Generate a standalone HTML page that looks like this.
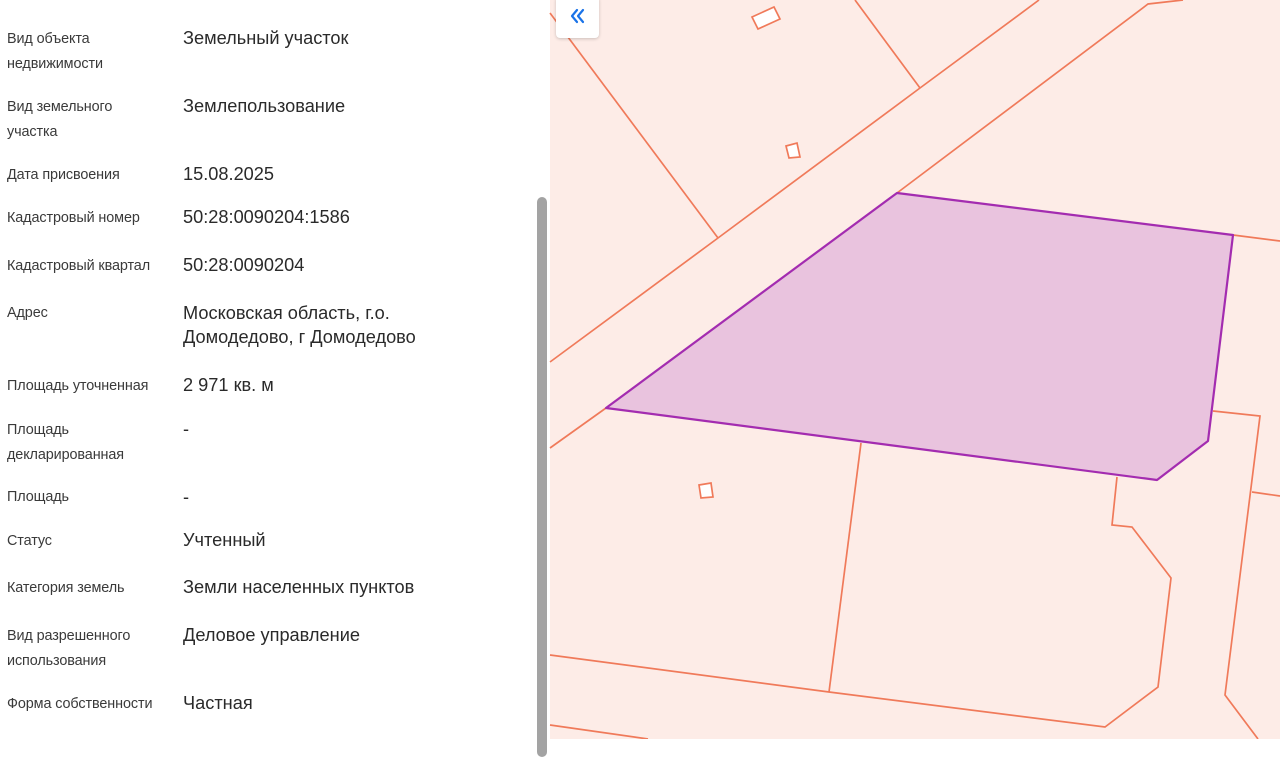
<!DOCTYPE html>
<html><head><meta charset="utf-8"><style>
html,body{margin:0;padding:0;width:1280px;height:739px;overflow:hidden;background:#fff;font-family:"Liberation Sans",sans-serif}
#left{position:absolute;left:0;top:0;width:550px;height:739px;background:#fff}
.l{position:absolute;left:7px;font-size:14.4px;color:#3a3a3a;line-height:25px;letter-spacing:-0.1px}
.v{position:absolute;left:183px;font-size:18.2px;color:#2a2a2a;line-height:24px}
#sb{position:absolute;left:537px;top:197px;width:10px;height:560px;background:#a3a3a3;border-radius:5px}
#map{position:absolute;left:550px;top:0;width:730px;height:739px;background:#fdece7}
#btn{position:absolute;left:556px;top:-4px;width:43px;height:42px;background:#fff;border-radius:4px;box-shadow:0 1px 3px rgba(0,0,0,.2)}
</style></head><body>
<div id="left">
<div class="l" style="top:27px">Вид объекта<br>недвижимости</div><div class="v" style="top:26px">Земельный участок</div>
<div class="l" style="top:95px">Вид земельного<br>участка</div><div class="v" style="top:94px">Землепользование</div>
<div class="l" style="top:163px">Дата присвоения</div><div class="v" style="top:162px">15.08.2025</div>
<div class="l" style="top:206px">Кадастровый номер</div><div class="v" style="top:205px">50:28:0090204:1586</div>
<div class="l" style="top:254px">Кадастровый квартал</div><div class="v" style="top:253px">50:28:0090204</div>
<div class="l" style="top:301px">Адрес</div><div class="v" style="top:301px">Московская область, г.о.<br>Домодедово, г Домодедово</div>
<div class="l" style="top:374px">Площадь уточненная</div><div class="v" style="top:373px">2 971 кв. м</div>
<div class="l" style="top:418px">Площадь<br>декларированная</div><div class="v" style="top:417px">-</div>
<div class="l" style="top:485px">Площадь</div><div class="v" style="top:485px">-</div>
<div class="l" style="top:529px">Статус</div><div class="v" style="top:528px">Учтенный</div>
<div class="l" style="top:576px">Категория земель</div><div class="v" style="top:575px">Земли населенных пунктов</div>
<div class="l" style="top:624px">Вид разрешенного<br>использования</div><div class="v" style="top:623px">Деловое управление</div>
<div class="l" style="top:692px">Форма собственности</div><div class="v" style="top:691px">Частная</div>
<div id="sb"></div>
</div>
<div id="map"></div>
<svg style="position:absolute;left:0;top:0" width="1280" height="739">
<g fill="none" stroke="#f07a5a" stroke-width="1.7">
<polyline points="550,362 718,238 920,88 1039,0"/>
<polyline points="550,13 718,238"/>
<polyline points="855,0 920,88"/>
<polyline points="897,193 1148,4 1183,0"/>
<polyline points="606,408 550,448"/>
<polyline points="1233,235 1280,241"/>
<polyline points="1213,411 1260,416 1225,695 1258,739"/>
<polyline points="1252,492 1280,496"/>
<polyline points="861,443 829,692"/>
<polyline points="550,655 829,692 1105,727 1158,687 1171,578 1132,527 1112,525 1117,477"/>
<polyline points="550,725 648,739"/>
<polygon points="752,17 774,7 780,19 758,29" fill="#fff"/>
<polygon points="786,146 797,143 800,157 789,158" fill="#fff"/>
<polygon points="699,485 711,483 713,497 701,498" fill="#fff"/>
</g>
<polygon points="897,193 1233,235 1208,441 1157,480 606,408" fill="#e9c3de" stroke="#a32cb0" stroke-width="2.2" stroke-linejoin="round"/>
</svg>
<div id="btn"><svg width="43" height="42" style="position:absolute;left:0;top:0"><g fill="none" stroke="#1a73e8" stroke-width="2.2" stroke-linecap="round" stroke-linejoin="round"><polyline points="21,14 16,20 21,26"/><polyline points="27,14 22,20 27,26"/></g></svg></div>
</body></html>
